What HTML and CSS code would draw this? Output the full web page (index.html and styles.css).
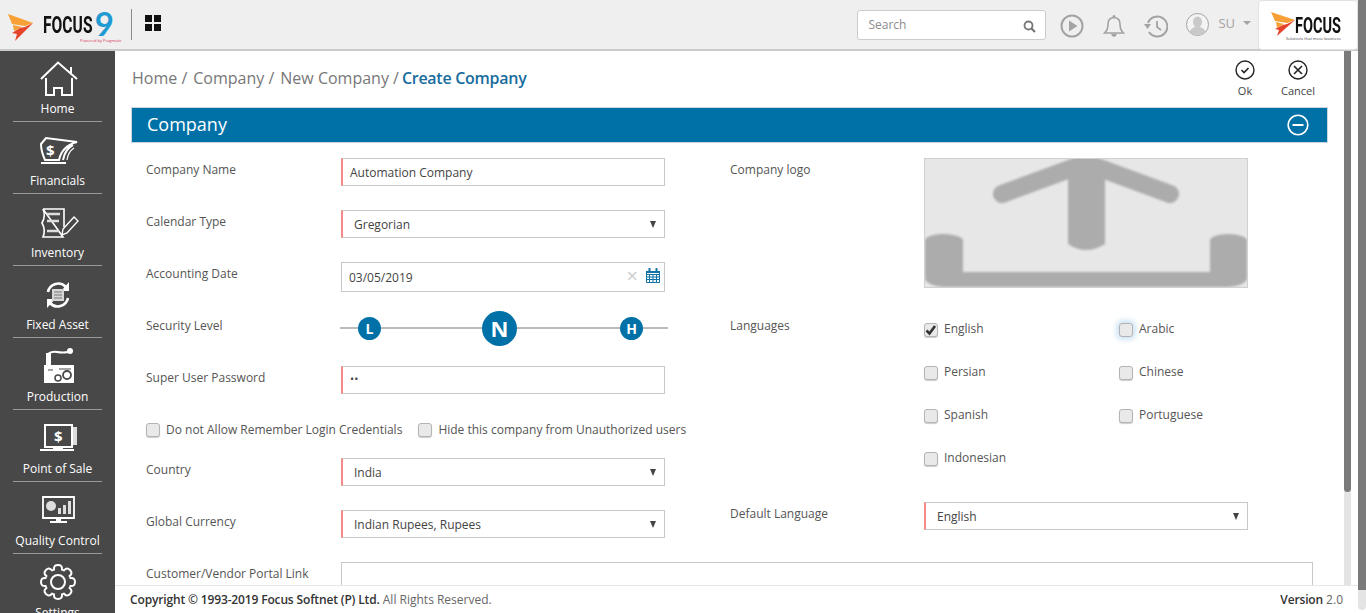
FILE: index.html
```html
<!DOCTYPE html>
<html>
<head>
    <meta charset="utf-8" />
    <title>Create Company</title>
    <link rel="stylesheet" href="styles.css">
</head>
<body>
    <div class="app">
        <header class="topbar">
            <div class="brand">
                <svg class="flame" width="34" height="44" viewBox="0 0 34 44">
                    <path fill="#f7a035" d="M8 9 L33 18 L25 21 L12 19 Z M13 20 L22 22 L14 26 Z" />
                    <path fill="#e5432a" d="M25 22 L33 18 L15 36 L17 29 L12 28 L20 23 Z" />
                </svg>
                <span class="brand-name">FOCUS</span>
                <span class="brand-nine">9</span>
                <span class="brand-by">Powered by Pragmatic</span>
            </div>
            <div class="divider"></div>
            <svg class="apps" width="16" height="16" viewBox="0 0 16 16">
                <path fill="#111" d="M0 0h7v7H0z M9 0h7v7H9z M0 9h7v7H0z M9 9h7v7H9z" />
            </svg>
            <div class="top-tools">
                <div class="search">
                    <span>Search</span>
                    <svg width="13" height="13" viewBox="0 0 13 13">
                        <circle cx="5.5" cy="5.5" r="4" fill="none" stroke="#777" stroke-width="1.8" />
                        <path d="M8.5 8.5 L12 12" stroke="#777" stroke-width="2.2" />
                    </svg>
                </div>
                <svg class="tool" width="24" height="24" viewBox="0 0 24 24">
                    <circle cx="12" cy="12" r="10.5" fill="none" stroke="#a3a3a3" stroke-width="2" />
                    <path fill="#a3a3a3" d="M9 6.5 L17.5 12 L9 17.5 Z" />
                </svg>
                <svg class="tool" width="22" height="24" viewBox="0 0 22 24">
                    <path fill="none" stroke="#a3a3a3" stroke-width="1.6" d="M1.5 19 Q5 16 5 10 Q5 4 11 3.5 Q17 4 17 10 Q17 16 20.5 19 Z" />
                    <circle cx="11" cy="2.5" r="1.5" fill="#a3a3a3" />
                    <path fill="#a3a3a3" d="M8 20 H14 Q13 23 11 23 Q9 23 8 20 Z" />
                </svg>
                <svg class="tool" width="24" height="24" viewBox="0 0 24 24">
                    <path fill="none" stroke="#a3a3a3" stroke-width="2" d="M4 9 A10 10 0 1 1 5 18" />
                    <path fill="#a3a3a3" d="M0 10 L7 10 L3.5 15 Z" />
                    <path fill="none" stroke="#a3a3a3" stroke-width="1.8" d="M13 7 V13 L17 16" />
                </svg>
                <svg class="avatar" width="23" height="23" viewBox="0 0 23 23">
                    <circle cx="11.5" cy="11.5" r="11" fill="#f4f4f4" stroke="#a3a3a3" />
                    <ellipse cx="11.5" cy="9" rx="4.5" ry="5.5" fill="#c9c9c9" />
                    <path fill="#c9c9c9" d="M3.5 19 Q5 15 9 14 H14 Q18 15 19.5 19 Q15 22.5 11.5 22.5 Q8 22.5 3.5 19 Z" />
                </svg>
                <span class="user">SU</span>
                <span class="caret"></span>
            </div>
            <div class="corner-logo">
                <svg class="corner-flame" width="26" height="26" viewBox="0 0 26 26">
                    <path fill="#f7a035" d="M1 1 L25 9 L17 12 L5 10 Z M6 11 L14 13 L7 17 Z" />
                    <path fill="#e5432a" d="M17 13 L25 9 L7 25 L9 19 L5 18 L13 14 Z" />
                </svg>
                <div class="corner-text">
                    <span class="corner-name">FOCUS</span>
                    <span class="corner-tag">Solutions that move business</span>
                </div>
            </div>
        </header>

        <div class="body-row">
            <nav class="sidebar">
                <a class="nav-item">
                    <svg width="46" height="42" viewBox="0 0 46 42" fill="none" stroke="#fff" stroke-width="2">
                        <path d="M6 20 L23 3.5 L42 20 M36 8 V14 M11 19 V36 H19 V29 H27 V36 H37 V19" />
                    </svg>
                    <span>Home</span>
                </a>
                <a class="nav-item">
                    <svg width="46" height="42" viewBox="0 0 46 42" fill="none" stroke="#fff" stroke-width="2">
                        <path d="M6 32 H31 M6 13 L11 7 L42 11 Q27 15 24 29 H10 Q6 20 6 13 Z M28 29 Q30 18 38 14" />
                        <path stroke-width="1.2" d="M32 29 Q33 21 39 17" />
                        <text class="glyph" x="11" y="25">$</text>
                    </svg>
                    <span>Financials</span>
                </a>
                <a class="nav-item">
                    <svg width="46" height="42" viewBox="0 0 46 42" fill="none" stroke="#fff" stroke-width="1.6">
                        <path d="M8 6 H29 V24 M28 34 H8 Q11 27 7 20 Q11 13 8 6 Z" />
                        <path stroke="#ddd" stroke-width="2.5" d="M12 11 H25 M12 18 H24 M12 28 H24" />
                        <path stroke-width="1.4" d="M39 14 L43 18 L32 30 L27 32 L28 26 Z" />
                    </svg>
                    <span>Inventory</span>
                </a>
                <a class="nav-item">
                    <svg width="46" height="42" viewBox="0 0 46 42" fill="none" stroke="#fff" stroke-width="2.6">
                        <path d="M13 17 A10.5 10.5 0 0 1 31 12 M33 23 A10.5 10.5 0 0 1 15 28" />
                        <path fill="#fff" stroke="none" d="M34 7 V16 H26 Z M12 33 V24 H20 Z" />
                        <path fill="#d6d6d6" stroke="none" d="M17 14 H29 V26 H17 Z" />
                        <path stroke="#777" stroke-width="1" d="M19 17 H27 M19 20 H27 M19 23 H27" />
                    </svg>
                    <span>Fixed Asset</span>
                </a>
                <a class="nav-item">
                    <svg width="46" height="42" viewBox="0 0 46 42" fill="none" stroke="#fff" stroke-width="2">
                        <path fill="#fff" stroke="none" d="M11 18 V6 H16 V18 H39 V36 H9 V18 Z" />
                        <path d="M13 7 Q16 4 22 5 T33 5" />
                        <circle cx="35" cy="4" r="3" fill="#fff" stroke="none" />
                        <circle cx="23" cy="31" r="3" stroke="#484848" stroke-width="1.5" />
                        <circle cx="32" cy="28" r="4" stroke="#484848" stroke-width="1.8" />
                        <path stroke="#888" stroke-width="1.5" d="M13 23 H18 M24 22 H36" />
                    </svg>
                    <span>Production</span>
                </a>
                <a class="nav-item">
                    <svg width="46" height="42" viewBox="0 0 46 42" fill="none" stroke="#fff" stroke-width="2">
                        <path d="M10 6 H37 V28 H10 Z" />
                        <path fill="#fff" stroke="none" d="M5 30 H39 V32 H5 Z M18 28 H28 V30 H18 Z" />
                        <path fill="#ddd" stroke="none" d="M38 8 H42 V26 H38 Z" />
                        <text class="glyph" x="19" y="23">$</text>
                    </svg>
                    <span>Point of Sale</span>
                </a>
                <a class="nav-item">
                    <svg width="46" height="42" viewBox="0 0 46 42" fill="none" stroke="#fff" stroke-width="1.8">
                        <path d="M8 6 H39 V27 H8 Z" />
                        <path fill="#fff" stroke="none" d="M21 27 H26 V30 H21 Z M15 30 H32 V32 H15 Z" />
                        <circle cx="16" cy="15" r="5" fill="#ddd" stroke="none" />
                        <path fill="#ddd" stroke="none" d="M23 17 H26 V23 H23 Z M28 14 H31 V23 H28 Z M33 10 H36 V23 H33 Z" />
                    </svg>
                    <span>Quality Control</span>
                </a>
                <a class="nav-item">
                    <svg width="46" height="42" viewBox="0 0 46 42" fill="none" stroke="#fff" stroke-width="2">
                        <defs>
                            <path id="tooth" d="M-4.97 -12.01 L-4 -12.4 Q-4.5 -17 0 -17 Q4.5 -17 4 -12.4 L4.97 -12.01" />
                        </defs>
                        <g transform="translate(23 19)">
                            <use href="#tooth" />
                            <use href="#tooth" transform="rotate(45)" />
                            <use href="#tooth" transform="rotate(90)" />
                            <use href="#tooth" transform="rotate(135)" />
                            <use href="#tooth" transform="rotate(180)" />
                            <use href="#tooth" transform="rotate(225)" />
                            <use href="#tooth" transform="rotate(270)" />
                            <use href="#tooth" transform="rotate(315)" />
                            <circle r="7" />
                        </g>
                    </svg>
                    <span>Settings</span>
                </a>
            </nav>

            <main class="main">
                <div class="content-row">
                    <div class="content">
                        <div class="title-row">
                            <div class="crumbs">
                                <span>Home /</span>
                                <span>Company /</span>
                                <span>New Company /</span>
                                <b>Create Company</b>
                            </div>
                            <div class="actions">
                                <a class="action">
                                    <svg width="20" height="20" viewBox="0 0 20 20" fill="none" stroke="#222" stroke-width="1.4">
                                        <circle cx="10" cy="10" r="9" />
                                        <path stroke-width="1.6" d="M6.5 10 L9 12.5 L13.5 8" />
                                    </svg>
                                    <span>Ok</span>
                                </a>
                                <a class="action">
                                    <svg width="20" height="20" viewBox="0 0 20 20" fill="none" stroke="#222" stroke-width="1.4">
                                        <circle cx="10" cy="10" r="9" />
                                        <path stroke-width="1.6" d="M6 6 L14 14 M14 6 L6 14" />
                                    </svg>
                                    <span>Cancel</span>
                                </a>
                            </div>
                        </div>

                        <div class="panel-head">
                            <span>Company</span>
                            <svg width="22" height="22" viewBox="0 0 22 22" fill="none" stroke="#fff" stroke-width="1.6">
                                <circle cx="11" cy="11" r="9.8" />
                                <path stroke-width="2" d="M5.5 11 H16.5" />
                            </svg>
                        </div>

                        <div class="form">
                            <div class="col">
                                <div class="row">
                                    <label>Company Name</label>
                                    <div class="field req">Automation Company</div>
                                </div>
                                <div class="row">
                                    <label>Calendar Type</label>
                                    <div class="field req select">Gregorian</div>
                                </div>
                                <div class="row">
                                    <label>Accounting Date</label>
                                    <div class="field date">
                                        <span>03/05/2019</span>
                                        <span class="clear">&times;</span>
                                        <svg width="14" height="15" viewBox="0 0 14 15" fill="none" stroke="#1273a8">
                                            <path d="M.5 3.5 H13.5 V14.5 H.5 Z M.5 6.5 H13.5 M.5 9 H13.5 M.5 11.5 H13.5 M3.5 6 V14 M7 6 V14 M10.5 6 V14" />
                                            <path stroke-width="2" d="M3.5 0 V3 M10.5 0 V3 M0 4 H14" />
                                        </svg>
                                    </div>
                                </div>
                                <div class="row">
                                    <label>Security Level</label>
                                    <div class="slider">
                                        <span class="knob knob-l">L</span>
                                        <span class="knob knob-n">N</span>
                                        <span class="knob knob-h">H</span>
                                    </div>
                                </div>
                                <div class="row">
                                    <label>Super User Password</label>
                                    <div class="field req pass">••</div>
                                </div>
                                <div class="check-row">
                                    <div class="check"><i class="box"></i>Do not Allow Remember Login Credentials</div>
                                    <div class="check"><i class="box"></i>Hide this company from Unauthorized users</div>
                                </div>
                                <div class="row">
                                    <label>Country</label>
                                    <div class="field req select">India</div>
                                </div>
                                <div class="row">
                                    <label>Global Currency</label>
                                    <div class="field req select">Indian Rupees, Rupees</div>
                                </div>
                            </div>
                            <div class="col col-right">
                                <div class="logo-row">
                                    <label>Company logo</label>
                                    <div class="upload">
                                        <svg width="322" height="128" viewBox="0 0 322 128">
                                            <g class="upload-art">
                                                <path fill="none" stroke="#acacac" stroke-width="18" stroke-linecap="round" d="M77 35 L161 4 L245 35" />
                                                <path fill="#acacac" d="M143 10 H180 V85 Q161 97 143 85 Z" />
                                                <path fill="#acacac" d="M0 82 Q0 76 18 75 Q38 76 38 82 V113 H285 V82 Q285 76 303 75 Q322 76 322 82 V120 Q318 128 298 128 H24 Q4 128 0 120 Z" />
                                            </g>
                                        </svg>
                                    </div>
                                </div>
                                <div class="lang-row">
                                    <label>Languages</label>
                                    <div class="lang-grid">
                                        <div class="check">
                                            <i class="box">
                                                <svg width="12" height="12" viewBox="0 0 12 12">
                                                    <path fill="none" stroke="#333" stroke-width="2.6" d="M1.5 6.5 L4.5 9.5 L10 2" />
                                                </svg>
                                            </i>English
                                        </div>
                                        <div class="check"><i class="box focus"></i>Arabic</div>
                                        <div class="check"><i class="box"></i>Persian</div>
                                        <div class="check"><i class="box"></i>Chinese</div>
                                        <div class="check"><i class="box"></i>Spanish</div>
                                        <div class="check"><i class="box"></i>Portuguese</div>
                                        <div class="check"><i class="box"></i>Indonesian</div>
                                    </div>
                                </div>
                                <div class="row">
                                    <label>Default Language</label>
                                    <div class="field req select">English</div>
                                </div>
                            </div>
                            <div class="row wide">
                                <label>Customer/Vendor Portal Link</label>
                                <div class="field"></div>
                            </div>
                        </div>
                    </div>
                    <div class="inner-scroll"><div class="thumb"></div></div>
                </div>
                <footer class="footer">
                    <div><b>Copyright &copy; 1993-2019 Focus Softnet (P) Ltd.</b> All Rights Reserved.</div>
                    <div><b>Version</b> 2.0</div>
                </footer>
            </main>
        </div>
    </div>
    <div class="outer-scroll"><div class="thumb"></div></div>
</body>
</html>
```

FILE: styles.css
```css
*
{
    box-sizing: border-box;
}

html, body
{
    height: 100%;
}

body
{
    margin: 0;
    display: flex;
    height: 613px;
    overflow: hidden;
    font: 12px 'Open Sans', sans-serif;
    color: #555;
    background: #fff;
}

b
{
    font-weight: 600;
}

.app
{
    flex: 1;
    min-width: 0;
    display: flex;
    flex-direction: column;
}

.outer-scroll
{
    width: 8px;
    height: 610px;
    background: #e4e4e4;
    border-radius: 0 0 4px 4px;
}

.outer-scroll .thumb
{
    height: 590px;
    background: #7a7a7a;
}

/* top bar */
.topbar
{
    height: 51px;
    flex: none;
    display: flex;
    align-items: center;
    background: #efefef;
    border-bottom: 2px solid #c9c9c9;
}

.brand
{
    width: 131px;
    height: 50px;
    display: flex;
    align-items: center;
    position: relative;
}

.flame
{
    margin-right: 8px;
    margin-top: 5px;
    flex: none;
}

.brand-name, .corner-name
{
    display: inline-block;
    font: 700 23px Roboto, sans-serif;
    color: #111;
    transform: scaleX(.68);
    transform-origin: left center;
}

.brand-name
{
    margin-left: 1px;
    margin-top: 2px;
    margin-right: -21px;
    line-height: 26px;
}

.brand-nine
{
    font: 700 33px/22px Lato, sans-serif;
    color: #1f9ad2;
    margin-top: -4px;
}

.brand-by
{
    position: absolute;
    left: 80px;
    top: 38px;
    font-size: 4px;
    line-height: 5px;
    white-space: nowrap;
    color: #d9365a;
}

.divider
{
    width: 1px;
    height: 31px;
    background: #8a8a8a;
    margin-top: -1px;
}

.apps
{
    margin-left: 13px;
    margin-top: -4px;
}

.top-tools
{
    margin-left: auto;
    display: flex;
    align-items: center;
    height: 50px;
}

.search
{
    width: 189px;
    height: 30px;
    padding: 0 9px 0 10px;
    display: flex;
    align-items: center;
    justify-content: space-between;
    background: #fff;
    border: 1px solid #ccc;
    border-radius: 3px;
    color: #8b8b8b;
}

.search svg
{
    margin-top: 3px;
}

.tool
{
    margin-left: 19px;
    margin-top: 2px;
}

.tool:first-of-type
{
    margin-left: 14px;
}

.avatar
{
    margin-left: 18px;
    margin-top: -1px;
}

.user
{
    margin-left: 9px;
    margin-top: -4px;
    color: #a3a3a3;
    font-size: 13px;
}

.caret
{
    margin-left: 8px;
    margin-right: 7px;
    margin-top: -3px;
    border-left: 4px solid transparent;
    border-right: 4px solid transparent;
    border-top: 4px solid #a3a3a3;
}

.corner-logo
{
    width: 100px;
    height: 50px;
    display: flex;
    align-items: center;
    padding-left: 11px;
    background: #fff;
    border: 1px solid #e2e2e2;
    border-radius: 4px;
}

.corner-flame
{
    flex: none;
    margin-top: -1px;
}

.corner-text
{
    display: flex;
    flex-direction: column;
    align-items: flex-start;
    margin-left: -10px;
    margin-top: 7px;
}

.corner-name
{
    font-size: 22px;
    line-height: 20px;
    margin-left: 9px;
    margin-right: -20px;
    transform: scaleX(.66);
}

.corner-tag
{
    font-size: 4px;
    line-height: 5px;
    white-space: nowrap;
    color: #444;
}

/* sidebar */
.body-row
{
    flex: 1;
    min-height: 0;
    display: flex;
}

.sidebar
{
    width: 115px;
    flex: none;
    background: #484848;
    overflow: hidden;
    color: #fff;
}

.nav-item
{
    display: flex;
    flex-direction: column;
    align-items: center;
    height: 71px;
    margin: 0 13px 1px;
    padding-top: 8px;
    border-bottom: 1px solid #9b9b9b;
    line-height: 16px;
    white-space: nowrap;
}

.nav-item svg
{
    flex: none;
}

.nav-item:last-child
{
    border-bottom: 0;
}

.glyph
{
    font: 700 15px 'Open Sans', sans-serif;
    fill: #fff;
    stroke: none;
}

/* main area */
.main
{
    flex: 1;
    min-width: 0;
    display: flex;
    flex-direction: column;
}

.content-row
{
    flex: 1;
    min-height: 0;
    display: flex;
}

.content
{
    flex: 1;
    min-width: 0;
    overflow: hidden;
    padding-left: 16px;
    padding-right: 16px;
}

.inner-scroll
{
    width: 7px;
    margin-right: 7px;
    background: #e4e4e4;
}

.inner-scroll .thumb
{
    height: 441px;
    background: #7a7a7a;
    border-radius: 0 0 4px 4px;
}

.title-row
{
    height: 56px;
    display: flex;
    justify-content: space-between;
}

.crumbs
{
    padding-top: 16px;
    padding-left: 1px;
    font-size: 16px;
    line-height: 22px;
    color: #777;
    display: flex;
    gap: 6px;
}

.crumbs b
{
    margin-left: -3px;
    letter-spacing: -.28px;
    color: #176c9d;
}

.actions
{
    display: flex;
    gap: 13px;
    padding-right: 10px;
    padding-top: 9px;
}

.action
{
    width: 40px;
    display: flex;
    flex-direction: column;
    align-items: center;
    gap: 4px;
    font-size: 11px;
    line-height: 14px;
    color: #444;
}

.panel-head
{
    height: 36px;
    padding: 0 18px 0 15px;
    display: flex;
    align-items: center;
    justify-content: space-between;
    background: #0071a7;
    border: 1px solid #c9d6de;
    color: #fff;
    font-size: 18px;
}

.panel-head span
{
    margin-top: -2px;
}

/* form */
.form
{
    display: grid;
    grid-template-columns: 584px 1fr;
    padding: 15px 0 0 15px;
}

.row
{
    display: flex;
    height: 52px;
}

.row label, .logo-row label, .lang-row label
{
    width: 195px;
    flex: none;
    padding-top: 3px;
    line-height: 18px;
}

.col-right label, .col-right .row label
{
    width: 194px;
}

.field
{
    width: 324px;
    height: 28px;
    padding: 0 8px;
    line-height: 28px;
    border: 1px solid #c8c8c8;
    color: #444;
    position: relative;
}

.req
{
    border-left: 2px solid #f48a8a;
    padding-left: 7px;
}

.select
{
    padding-left: 11px;
}

.select::after
{
    content: '';
    position: absolute;
    right: 8px;
    top: 10px;
    border-left: 3.5px solid transparent;
    border-right: 3.5px solid transparent;
    border-top: 7px solid #444;
}

.date
{
    height: 30px;
    display: flex;
    align-items: center;
    padding-left: 7px;
    padding-right: 4px;
}

.date span:first-child
{
    flex: 1;
    padding-top: 2px;
}

.clear
{
    margin-right: 8px;
    margin-top: -3px;
    font-size: 20px;
    color: #ccc;
}

.date svg
{
    margin-top: -4px;
}

.slider
{
    width: 328px;
    height: 28px;
    margin-left: -1px;
    display: flex;
    align-items: center;
    background: linear-gradient(#bbb, #bbb) 0 50% / 100% 2px no-repeat;
}

.knob
{
    width: 23px;
    height: 23px;
    flex: none;
    display: flex;
    align-items: center;
    justify-content: center;
    border-radius: 50%;
    background: #0071a7;
    color: #fff;
    font-weight: 700;
    font-size: 14px;
}

.knob-l
{
    margin-left: 18px;
}

.knob-n
{
    width: 35px;
    height: 35px;
    margin-left: 101px;
    font-size: 22px;
}

.knob-h
{
    margin-left: 103px;
}

.pass
{
    font-size: 11px;
    line-height: 24px;
}

.check-row
{
    height: 40px;
    display: flex;
    gap: 16px;
    padding-top: 4px;
}

.check
{
    display: flex;
    align-items: flex-start;
    gap: 6px;
    line-height: 16px;
    white-space: nowrap;
}

.box
{
    width: 14px;
    height: 14px;
    flex: none;
    border: 1px solid #b4b4b4;
    border-radius: 3px;
    background: #e9e9e9;
    box-shadow: 0 1px 1px #ccc;
    margin-top: 1px;
}

.box svg
{
    display: block;
}

.focus
{
    box-shadow: 0 0 6px 2px #bfdcf3;
}

.logo-row
{
    display: flex;
    height: 156px;
}

.upload
{
    width: 324px;
    height: 130px;
    border: 1px solid #d0d0d0;
    background: #e7e7e7;
    overflow: hidden;
}

.upload svg
{
    display: block;
}

.upload-art
{
    filter: blur(.8px);
}

.lang-row
{
    display: flex;
    height: 188px;
}

.lang-grid
{
    display: grid;
    grid-template-columns: 195px 1fr;
    grid-auto-rows: 43px;
    padding-top: 7px;
}

.lang-grid .box
{
    margin-top: 2px;
}

.wide
{
    grid-column: 1 / 3;
}

.wide .field
{
    width: 972px;
}

/* footer */
.footer
{
    height: 28px;
    flex: none;
    display: flex;
    align-items: center;
    justify-content: space-between;
    padding: 0 15px;
    background: #fff;
    border-top: 1px solid #e6e6e6;
    color: #666;
}

.footer b
{
    letter-spacing: -.15px;
    color: #333;
}
```
